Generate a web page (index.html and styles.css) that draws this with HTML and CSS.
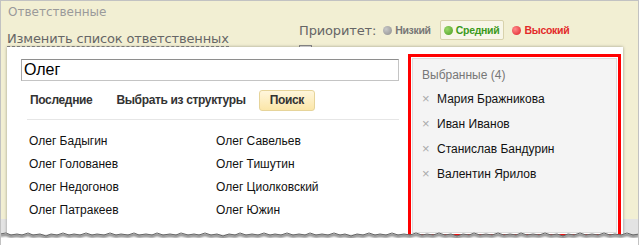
FILE: index.html
```html
<!DOCTYPE html>
<html lang="ru">
<head>
    <meta charset="UTF-8">
    <title>Ответственные</title>
    <link rel="stylesheet" href="styles.css">
</head>
<body>
    <div class="frame">
        <div class="title">Ответственные</div>

        <div class="toolbar">
            <div>
                <a class="edit-link">Изменить список ответственных</a>
            </div>
            <div class="priority-block">
                <div class="priority">
                    <span class="priority-label">Приоритет:</span>
                    <span class="prio low"><i class="dot"></i>Низкий</span>
                    <span class="prio mid active"><i class="dot"></i>Средний</span>
                    <span class="prio high"><i class="dot"></i>Высокий</span>
                </div>
                <div class="notify">
                    <span class="checkbox"></span>
                    <span>Информировать</span>
                </div>
            </div>
        </div>

        <!-- dropdown for choosing responsible people -->
        <div class="popup">
            <div class="search-col">
                <input type="text" class="search-input" value="Олег">

                <div class="tabs">
                    <span class="tab">Последние</span>
                    <span class="tab">Выбрать из структуры</span>
                    <span class="tab current">Поиск</span>
                </div>

                <div class="results">
                    <span>Олег Бадыгин</span>
                    <span>Олег Савельев</span>
                    <span>Олег Голованев</span>
                    <span>Олег Тишутин</span>
                    <span>Олег Недогонов</span>
                    <span>Олег Циолковский</span>
                    <span>Олег Патракеев</span>
                    <span>Олег Южин</span>
                </div>
            </div>

            <div class="selected-box">
                <div class="selected">
                    <div class="selected-title">Выбранные (4)</div>
                    <div class="selected-item"><span class="remove">×</span>Мария Бражникова</div>
                    <div class="selected-item"><span class="remove">×</span>Иван Иванов</div>
                    <div class="selected-item"><span class="remove">×</span>Станислав Бандурин</div>
                    <div class="selected-item"><span class="remove">×</span>Валентин Ярилов</div>
                </div>
            </div>
        </div>

        <svg class="torn-edge" width="639" height="20" viewBox="0 0 639 20">
            <defs>
                <filter id="blur"><feGaussianBlur stdDeviation="1.2"/></filter>
            </defs>
            <path fill="#fff" d="M0,6 L6,5 L11,7 L17,6 L22,7 L28,5 L33,7 L40,6 L46,8 L51,6 L57,7 L63,5 L69,7 L74,6 L80,7 L86,5 L92,7 L97,6 L104,7 L110,5 L116,7 L121,6 L128,7 L134,5 L139,7 L146,6 L152,7 L157,5 L163,7 L170,6 L176,7 L181,5 L188,7 L194,6 L199,7 L205,5 L211,7 L217,6 L223,8 L229,6 L235,7 L240,5 L246,7 L252,6 L258,7 L264,5 L270,7 L275,6 L281,7 L287,5 L293,7 L299,6 L305,7 L310,5 L316,7 L322,6 L328,7 L334,5 L340,7 L345,6 L351,8 L357,6 L363,7 L369,5 L375,7 L380,6 L386,7 L392,5 L398,7 L404,6 L410,7 L416,5 L422,7 L427,6 L433,7 L439,5 L445,7 L451,6 L457,8 L463,6 L469,7 L474,5 L480,7 L486,6 L492,7 L498,5 L504,7 L510,6 L516,7 L521,5 L527,7 L533,6 L539,7 L545,5 L551,7 L557,6 L563,8 L568,6 L574,7 L580,5 L586,7 L592,6 L598,7 L604,5 L610,7 L615,6 L621,7 L627,5 L633,7 L639,6 L639,20 L0,20 Z"/>
            <path fill="none" stroke="#777" stroke-width="2.5" filter="url(#blur)" transform="translate(0,1.5)" d="M0,6 L6,5 L11,7 L17,6 L22,7 L28,5 L33,7 L40,6 L46,8 L51,6 L57,7 L63,5 L69,7 L74,6 L80,7 L86,5 L92,7 L97,6 L104,7 L110,5 L116,7 L121,6 L128,7 L134,5 L139,7 L146,6 L152,7 L157,5 L163,7 L170,6 L176,7 L181,5 L188,7 L194,6 L199,7 L205,5 L211,7 L217,6 L223,8 L229,6 L235,7 L240,5 L246,7 L252,6 L258,7 L264,5 L270,7 L275,6 L281,7 L287,5 L293,7 L299,6 L305,7 L310,5 L316,7 L322,6 L328,7 L334,5 L340,7 L345,6 L351,8 L357,6 L363,7 L369,5 L375,7 L380,6 L386,7 L392,5 L398,7 L404,6 L410,7 L416,5 L422,7 L427,6 L433,7 L439,5 L445,7 L451,6 L457,8 L463,6 L469,7 L474,5 L480,7 L486,6 L492,7 L498,5 L504,7 L510,6 L516,7 L521,5 L527,7 L533,6 L539,7 L545,5 L551,7 L557,6 L563,8 L568,6 L574,7 L580,5 L586,7 L592,6 L598,7 L604,5 L610,7 L615,6 L621,7 L627,5 L633,7 L639,6"/>
            <path fill="none" stroke="#666" stroke-width="1" d="M0,6 L6,5 L11,7 L17,6 L22,7 L28,5 L33,7 L40,6 L46,8 L51,6 L57,7 L63,5 L69,7 L74,6 L80,7 L86,5 L92,7 L97,6 L104,7 L110,5 L116,7 L121,6 L128,7 L134,5 L139,7 L146,6 L152,7 L157,5 L163,7 L170,6 L176,7 L181,5 L188,7 L194,6 L199,7 L205,5 L211,7 L217,6 L223,8 L229,6 L235,7 L240,5 L246,7 L252,6 L258,7 L264,5 L270,7 L275,6 L281,7 L287,5 L293,7 L299,6 L305,7 L310,5 L316,7 L322,6 L328,7 L334,5 L340,7 L345,6 L351,8 L357,6 L363,7 L369,5 L375,7 L380,6 L386,7 L392,5 L398,7 L404,6 L410,7 L416,5 L422,7 L427,6 L433,7 L439,5 L445,7 L451,6 L457,8 L463,6 L469,7 L474,5 L480,7 L486,6 L492,7 L498,5 L504,7 L510,6 L516,7 L521,5 L527,7 L533,6 L539,7 L545,5 L551,7 L557,6 L563,8 L568,6 L574,7 L580,5 L586,7 L592,6 L598,7 L604,5 L610,7 L615,6 L621,7 L627,5 L633,7 L639,6"/>
        </svg>
    </div>
</body>
</html>
```

FILE: styles.css
```css
body {
    margin: 0;
    background: #fff;
    font-family: "Liberation Sans", Arial, sans-serif;
}
.frame {
    position: relative;
    width: 637px;
    height: 244px;
    border: 1px solid #c2c2c2;
    border-bottom: none;
    background: linear-gradient(#f2efd3 0, #f2efd3 218px, #e3e3e3 218px);
    overflow: hidden;
}
.title {
    padding: 3px 7px 0;
    height: 16px;
    line-height: 16px;
    font: 12px/16px "DejaVu Sans", sans-serif;
    color: #9a9a9a;
}
.toolbar {
    display: grid;
    grid-template-columns: 292px 1fr;
    padding-left: 6px;
}
.edit-link {
    display: inline-block;
    margin-top: 12px;
    font: 13px/14px "DejaVu Sans", sans-serif;
    letter-spacing: -0.15px;
    color: #666;
    border-bottom: 1px dashed #8a8a8a;
}
.priority {
    display: flex;
    align-items: center;
    height: 20px;
}
.priority-label {
    font: 13px "DejaVu Sans", sans-serif;
    letter-spacing: -0.15px;
    color: #666;
    margin-right: 3px;
}
.prio {
    display: inline-flex;
    align-items: center;
    gap: 3px;
    height: 18px;
    padding: 0 4px 0 3px;
    margin-right: 4px;
    border: 1px solid transparent;
    border-radius: 2px;
    font-size: 10.5px;
    font-weight: bold;
    letter-spacing: -0.3px;
}
.prio .dot {
    width: 9px;
    height: 9px;
    border-radius: 50%;
}
.prio.low { color: #777; }
.prio.low .dot { background: radial-gradient(circle at 35% 35%, #c8c8c8, #8e8e8e); }
.prio.mid { color: #3c9a1c; }
.prio.mid .dot { background: radial-gradient(circle at 35% 35%, #9ad86a, #4a9e22); }
.prio.high { color: #e32a2a; }
.prio.high .dot { background: radial-gradient(circle at 35% 35%, #ff8a8a, #e01e28); }
.prio.active {
    border-color: #d8d2ac;
    background: #f8f6e8;
}
.notify {
    display: flex;
    align-items: center;
    gap: 8px;
    margin-top: 4px;
    font: 13px "DejaVu Sans", sans-serif;
    color: #555;
}
.checkbox {
    width: 11px;
    height: 11px;
    border: 1px solid #8a8a8a;
    background: linear-gradient(#e4e4e4, #fff);
}
.popup {
    position: absolute;
    left: 6px;
    top: 46px;
    width: 616px;
    height: 200px;
    display: flex;
    background: #fff;
    box-shadow: 0 0 3px rgba(0, 0, 0, 0.35);
}
.search-col {
    width: 378px;
    margin-left: 14px;
    padding-top: 12px;
}
.search-input {
    display: block;
    box-sizing: border-box;
    width: 378px;
    height: 22px;
    margin: 0;
    padding: 0 2px;
    border: 1px solid #c4c4c4;
    border-top-color: #8e8e8e;
    border-left-color: #a8a8a8;
    font: 16px "Liberation Sans", Arial, sans-serif;
    color: #000;
    outline: none;
}
.tabs {
    display: flex;
    align-items: center;
    margin: 9px 0 0 -1px;
    height: 21px;
}
.tab {
    padding: 0 10px;
    font-size: 12px;
    font-weight: bold;
    letter-spacing: -0.35px;
    color: #333;
    line-height: 19px;
}
.tab:first-child {
    margin-right: 4px;
}
.tab.current {
    margin-left: 3px;
    border: 1px solid #e6d49a;
    border-radius: 3px;
    background: linear-gradient(#fff6dc, #fbe6a8);
}
.results {
    display: grid;
    grid-template-columns: 187px 1fr;
    margin: 8px 0 0 6px;
    padding: 10px 0 0 2px;
    border-top: 1px solid #e6e6e6;
    font-size: 12px;
    line-height: 23px;
    color: #111;
}
.selected-box {
    margin: 7px 0 0 9px;
    width: 205px;
    height: 175px;
    padding: 1px;
    border: 3px solid #f00;
    background: #fff;
}
.selected {
    box-sizing: border-box;
    height: 100%;
    padding: 6px 0 0 9px;
    border: 1px solid #dcdcdc;
    background: #f4f4f4;
}
.selected-title {
    font-size: 12px;
    line-height: 20px;
    height: 21px;
    color: #777;
}
.selected-item {
    display: flex;
    align-items: center;
    height: 25px;
    font-size: 12px;
    color: #111;
}
.remove {
    width: 15px;
    color: #aaa;
    font-size: 13px;
}
.torn-edge {
    position: absolute;
    left: -1px;
    top: 227px;
}
```
